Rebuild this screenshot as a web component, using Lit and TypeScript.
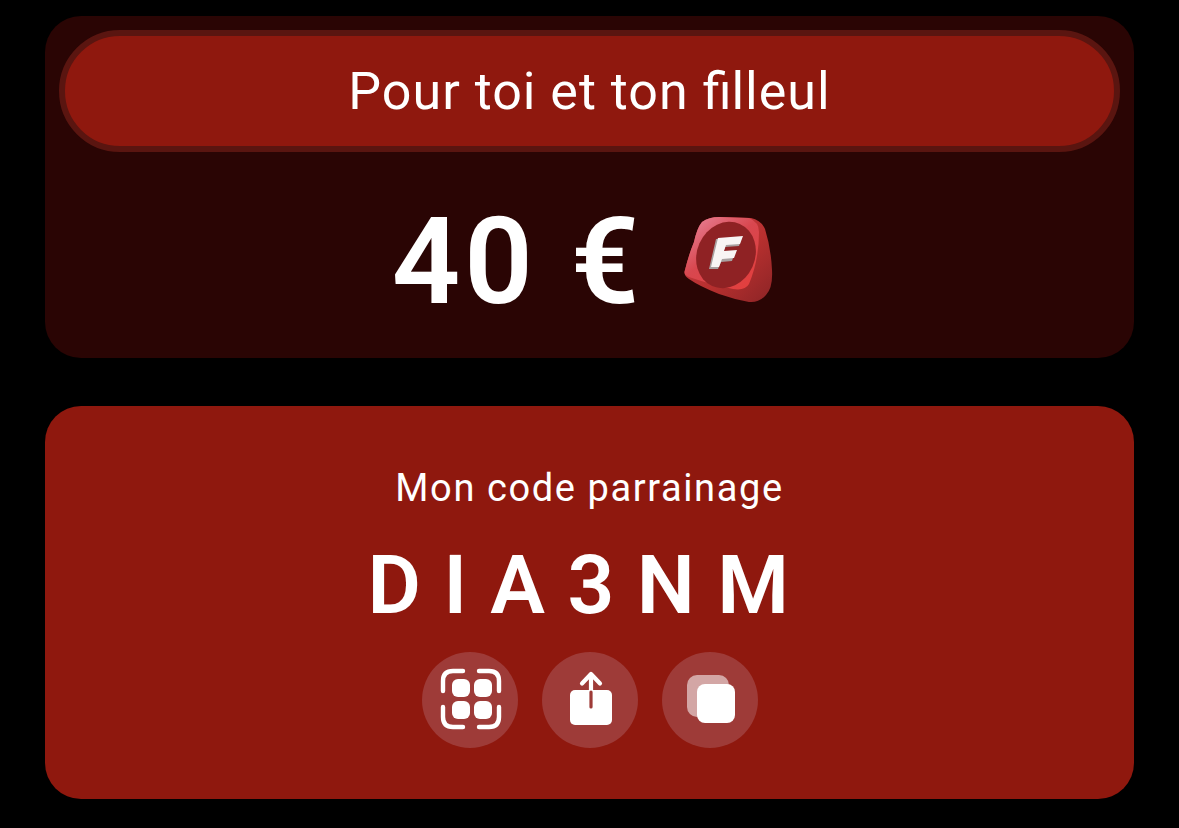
import {css, html, LitElement} from 'lit';
import {customElement} from 'lit/decorators.js';

const logo = html`
	<svg class="logo" viewBox="0 0 120 120" width="120" height="120">
		<defs>
			<linearGradient id="side" x1="0" y1="0" x2="1" y2="1">
				<stop offset="0" stop-color="#c9404c"/>
				<stop offset="0.55" stop-color="#b8302f"/>
				<stop offset="1" stop-color="#8c2426"/>
			</linearGradient>
			<linearGradient id="rim" x1="0" y1="0" x2="0.8" y2="1">
				<stop offset="0" stop-color="#ea8aa0"/>
				<stop offset="0.5" stop-color="#d8474f"/>
				<stop offset="1" stop-color="#e23f3e"/>
			</linearGradient>
		</defs>
		<path d="M33 22 Q40 17 50 17 L82 18 Q92 20 96 29 Q102 48 103 70 Q104 88 97 95 Q90 103 80 102 Q64 99 50 94 Q30 86 20 79 Q14 75 16 70 Q20 54 25 42 Q28 28 33 22Z" fill="url(#side)"/>
		<path d="M33 22 Q40 17 50 17 L80 18 Q90 22 90 32 Q90 60 80 84 Q76 91 64 89 Q40 84 20 77 Q14 75 16 70 Q20 54 25 42 Q28 28 33 22Z" fill="url(#rim)"/>
		<ellipse cx="57" cy="55" rx="29" ry="34" transform="rotate(24 57 55)" fill="#8f2224"/>
		<path d="M47 39 L73 37 L70 46 L56 47 L54 53 L66 52 L63 61 L52 62 L49 69 L40 69Z" fill="#a8a0a0"/>
		<path d="M49 38 L74 36 L71 44 L57 45 L55 51 L68 50 L65 58 L53 59 L50 67 L42 67Z" fill="#f8f4f4"/>
	</svg>`;

const scanIcon = html`
	<svg viewBox="0 0 64 64" width="64" height="64" fill="none">
		<g stroke="#fff" stroke-width="4.4" stroke-linecap="round">
			<path d="M5 23 V13 Q5 3 15 3 H25"/>
			<path d="M41 3 H51 Q61 3 61 13 V23"/>
			<path d="M5 39 V49 Q5 59 15 59 H25"/>
			<path d="M41 59 H51 Q61 59 61 49 V39"/>
		</g>
		<g fill="#fff">
			<rect x="14" y="11" width="18" height="18" rx="6"/>
			<rect x="36" y="11" width="18" height="18" rx="6"/>
			<rect x="14" y="33" width="18" height="18" rx="6"/>
			<rect x="36" y="33" width="18" height="18" rx="6"/>
		</g>
	</svg>`;

const shareIcon = html`
	<svg viewBox="0 0 64 64" width="64" height="64" fill="none">
		<rect x="12" y="22" width="42" height="35" rx="5" fill="#fff"/>
		<path d="M33 22 V6 M24 15.5 L33 6 L42 15.5" stroke="#fff" stroke-width="4.2" stroke-linecap="round" stroke-linejoin="round"/>
		<path d="M33 24 V39" stroke="#9e3b38" stroke-width="3.2" stroke-linecap="round"/>
	</svg>`;

const copyIcon = html`
	<svg viewBox="0 0 64 64" width="64" height="64">
		<rect x="9" y="7" width="42" height="42" rx="10" fill="#fff" fill-opacity="0.55"/>
		<rect x="19" y="16" width="38" height="39" rx="8" fill="#fff"/>
	</svg>`;

@customElement('app-root')
export class AppRoot extends LitElement {
	protected render() {
		return html`
		<main>
			<section class="reward">
				<div class="pill">Pour toi et ton <span class="lig">fi</span>lleul</div>
				<div class="amount">
					<span>40 €</span>
					${logo}
				</div>
			</section>
			<section class="code">
				<div class="label">Mon code parrainage</div>
				<div class="value">DIA3NM</div>
				<div class="actions">
					<button>${scanIcon}</button>
					<button>${shareIcon}</button>
					<button>${copyIcon}</button>
				</div>
			</section>
		</main>
		`;
	}

	static styles = css`
		:host {
			display: block;
			height: 828px;
			background: #000;
			color: #fff;
			font-family: Roboto, "Noto Sans", sans-serif;
			overflow: hidden;
		}

		main {
			display: flex;
			flex-direction: column;
			gap: 48px;
			padding: 16px 45px 0;
		}

		section {
			border-radius: 36px;
		}

		.reward {
			height: 342px;
			background: #2a0504;
			padding: 14px;
			box-sizing: border-box;
		}

		.pill {
			height: 122px;
			box-sizing: border-box;
			border: 6px solid #5a1510;
			border-radius: 61px;
			background: #8f180e;
			display: flex;
			align-items: center;
			justify-content: center;
			white-space: pre;
			font-size: 52px;
			letter-spacing: 1px;
		}

		.lig {
			letter-spacing: 0;
		}

		.amount {
			display: flex;
			align-items: center;
			justify-content: center;
			margin-top: 48px;
			height: 120px;
			font-size: 120px;
			line-height: 120px;
			font-weight: 600;
			letter-spacing: 4px;
		}

		.amount span {
			margin-left: 2px;
			padding-top: 3px;
		}

		.logo {
			margin-left: 26px;
		}

		.code {
			height: 393px;
			background: #8f180e;
			display: flex;
			flex-direction: column;
			align-items: center;
		}

		.label {
			margin-top: 56px;
			font-size: 38px;
			line-height: 52px;
			letter-spacing: 1.6px;
		}

		.value {
			margin-top: 21px;
			font-size: 82px;
			font-weight: 600;
			line-height: 100px;
			letter-spacing: 22.5px;
		}

		.actions {
			display: flex;
			gap: 24px;
			margin-top: 17px;
		}

		button {
			width: 96px;
			height: 96px;
			border: 0;
			padding: 0;
			border-radius: 50%;
			background: #9e3b38;
			display: flex;
			align-items: center;
			justify-content: center;
		}
	`;
}
